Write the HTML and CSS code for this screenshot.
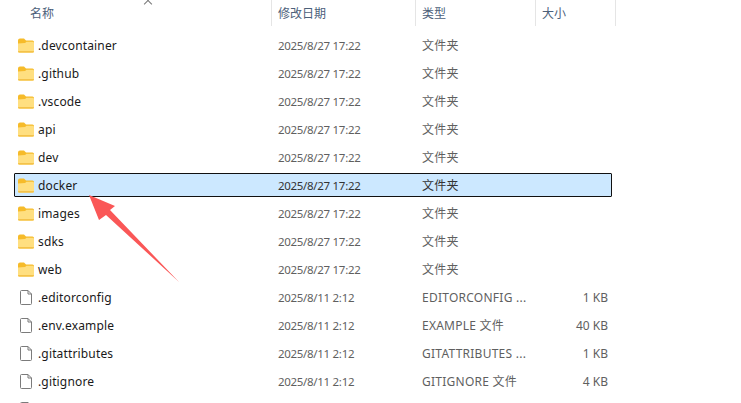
FILE: index.html
```html
<!DOCTYPE html>
<html lang="zh-CN">
<head>
    <meta charset="UTF-8">
    <title>docker</title>
    <link rel="stylesheet" href="styles.css">
</head>
<body>
    <svg width="0" height="0" class="defs">
        <symbol id="folder" viewBox="0 0 16 14">
            <path d="M0 2 Q0 0 2 0 H6 L8 2 H14.500 Q16 2 16 3.500 V12.500 Q16 14 14.500 14 H1.500 Q0 14 0 12.500 Z" fill="#f6bb2a"/>
            <path d="M0 5 L7 4.500 L8.500 3.200 H14.500 Q16 3.200 16 4.500 V12.500 Q16 14 14.500 14 H1.500 Q0 14 0 12.500 Z" fill="#ffdf80"/>
            <path d="M0 12.500 Q0 14 1.500 14 H14.500 Q16 14 16 12.500 Z" fill="#f4c24a"/>
        </symbol>
        <symbol id="file" viewBox="0 0 12 15">
            <path d="M.5 1.500 Q.5 .5 1.500 .5 H8 L11.500 4 V13.500 Q11.500 14.500 10.500 14.500 H1.500 Q.5 14.500 .5 13.500 Z M8 .5 V4 H11.500" fill="#fff" stroke="#7b7b7b"/>
        </symbol>
    </svg>

    <!-- Column headers -->
    <div class="header">
        <div class="head head-name">名称<span class="caret"></span></div>
        <div class="head head-date">修改日期</div>
        <div class="head head-type">类型</div>
        <div class="head head-size">大小</div>
    </div>

    <!-- File rows -->
    <div class="list">
        <div class="row"><svg class="icon"><use href="#folder"/></svg><span class="name">.devcontainer</span><span class="date">2025/8/27 17:22</span><span class="type">文件夹</span><span class="size"></span></div>
        <div class="row"><svg class="icon"><use href="#folder"/></svg><span class="name">.github</span><span class="date">2025/8/27 17:22</span><span class="type">文件夹</span><span class="size"></span></div>
        <div class="row"><svg class="icon"><use href="#folder"/></svg><span class="name">.vscode</span><span class="date">2025/8/27 17:22</span><span class="type">文件夹</span><span class="size"></span></div>
        <div class="row"><svg class="icon"><use href="#folder"/></svg><span class="name">api</span><span class="date">2025/8/27 17:22</span><span class="type">文件夹</span><span class="size"></span></div>
        <div class="row"><svg class="icon"><use href="#folder"/></svg><span class="name">dev</span><span class="date">2025/8/27 17:22</span><span class="type">文件夹</span><span class="size"></span></div>
        <div class="row selected"><svg class="icon"><use href="#folder"/></svg><span class="name">docker</span><span class="date">2025/8/27 17:22</span><span class="type">文件夹</span><span class="size"></span></div>
        <div class="row"><svg class="icon"><use href="#folder"/></svg><span class="name">images</span><span class="date">2025/8/27 17:22</span><span class="type">文件夹</span><span class="size"></span></div>
        <div class="row"><svg class="icon"><use href="#folder"/></svg><span class="name">sdks</span><span class="date">2025/8/27 17:22</span><span class="type">文件夹</span><span class="size"></span></div>
        <div class="row"><svg class="icon"><use href="#folder"/></svg><span class="name">web</span><span class="date">2025/8/27 17:22</span><span class="type">文件夹</span><span class="size"></span></div>
        <div class="row"><svg class="icon"><use href="#file"/></svg><span class="name">.editorconfig</span><span class="date">2025/8/11 2:12</span><span class="type">EDITORCONFIG ...</span><span class="size">1 KB</span></div>
        <div class="row"><svg class="icon"><use href="#file"/></svg><span class="name">.env.example</span><span class="date">2025/8/11 2:12</span><span class="type">EXAMPLE 文件</span><span class="size">40 KB</span></div>
        <div class="row"><svg class="icon"><use href="#file"/></svg><span class="name">.gitattributes</span><span class="date">2025/8/11 2:12</span><span class="type">GITATTRIBUTES ...</span><span class="size">1 KB</span></div>
        <div class="row"><svg class="icon"><use href="#file"/></svg><span class="name">.gitignore</span><span class="date">2025/8/11 2:12</span><span class="type">GITIGNORE 文件</span><span class="size">4 KB</span></div>
        <div class="row"><svg class="icon"><use href="#file"/></svg></div>
    </div>

    <!-- Annotation arrow drawn over the list -->
    <svg class="arrow" width="741" height="403" viewBox="0 0 741 403">
        <polygon points="89,195 115,206 110,210 179,282 106,215 99,220" fill="#fa5757"/>
    </svg>
</body>
</html>
```

FILE: styles.css
```css
/* ====== Base Layout ====== */
html, body {
    height: 100%;
}
body {
    margin: 0;
    position: relative;
    overflow: hidden;
    background: #fff;
    font-family: 'Noto Sans', 'Noto Sans CJK SC', sans-serif;
    font-size: 12px;
    color: #1a1a1a;
}
.defs {
    position: absolute;
}

/* ====== Column Headers ====== */
.header {
    display: flex;
    height: 26px;
    padding-left: 14px;
    color: #4c607a;
}
.head {
    box-sizing: border-box;
    height: 26px;
    line-height: 28px;
    border-right: 1px solid #e5e5e5;
    position: relative;
}
.head-name {
    width: 258px;
    padding-left: 16px;
}
.head-date {
    width: 144px;
    padding-left: 6px;
}
.head-type {
    width: 120px;
    padding-left: 6px;
}
.head-size {
    width: 80px;
    padding-left: 6px;
}
.caret {
    position: absolute;
    left: 131px;
    top: 1px;
    width: 5px;
    height: 5px;
    border-left: 1px solid #777;
    border-top: 1px solid #777;
    transform: rotate(45deg);
}

/* ====== File Rows ====== */
.list {
    display: flex;
    flex-direction: column;
    gap: 4px;
    padding: 7px 0 0 14px;
    width: 598px;
}
.row {
    box-sizing: border-box;
    display: flex;
    align-items: center;
    flex: none;
    height: 24px;
    padding: 0 3px;
    border: 1px solid transparent;
}
.row.selected {
    background: #cce8ff;
    border-color: #111;
    border-radius: 1px;
}
.icon {
    flex: none;
    width: 16px;
    height: 15px;
    margin-right: 4px;
}
.name {
    width: 240px;
    color: #1a1a1a;
    letter-spacing: 0.15px;
    white-space: nowrap;
}
.date {
    width: 144px;
    color: #5f5f5f;
    font-size: 11.5px;
    letter-spacing: -0.3px;
}
.type {
    width: 120px;
    color: #5f5f5f;
    letter-spacing: 0.25px;
    white-space: nowrap;
}
.size {
    flex: 1;
    text-align: right;
    color: #5f5f5f;
}
.selected .date, .selected .type {
    color: #333;
}

/* ====== Annotation ====== */
.arrow {
    position: absolute;
    left: 0;
    top: 0;
}
```
